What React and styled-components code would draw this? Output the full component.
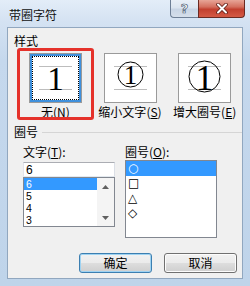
import React from 'react';
import styled, { createGlobalStyle } from 'styled-components';

const GlobalStyle = createGlobalStyle`
  html, body {
    margin: 0;
    padding: 0;
  }
  body {
    width: 250px;
    height: 286px;
    overflow: hidden;
    font-family: "Noto Sans CJK SC", "Liberation Sans", sans-serif;
    font-size: 12px;
    color: #000;
  }
`;

const Window = styled.div`
  width: 250px;
  height: 286px;
  display: flex;
  flex-direction: column;
  box-sizing: border-box;
  background: linear-gradient(180deg, #e3edf8 0px, #d4e2f2 22px, #c5d8ed 60px, #bfd4ea 100%);
`;

const TitleBar = styled.div`
  height: 27px;
  display: flex;
  align-items: flex-start;
`;

const Title = styled.div`
  flex: 1;
  margin: 9px 0 0 9px;
  line-height: 12px;
  color: #111;
`;

const CaptionButtons = styled.div`
  display: flex;
  margin-right: 5px;
`;

const HelpButton = styled.div`
  width: 28px;
  height: 18px;
  box-sizing: border-box;
  border: 1px solid #6e7f96;
  border-top: none;
  border-right: none;
  border-bottom-left-radius: 4px;
  background: linear-gradient(180deg, #e9eff7 0%, #dce5f0 45%, #c9d5e5 55%, #d5dfeb 100%);
  display: flex;
  align-items: center;
  justify-content: center;
  font-family: "DejaVu Sans", sans-serif;
  font-weight: bold;
  font-size: 13px;
  color: #fff;
  -webkit-text-stroke: 0.7px #4f5f75;
`;

const CloseButton = styled.div`
  width: 47px;
  height: 18px;
  box-sizing: border-box;
  border: 1px solid #6a2a22;
  border-top: none;
  border-bottom-right-radius: 4px;
  background: linear-gradient(180deg, #e7a597 0%, #d4705f 40%, #c2402f 55%, #d45a45 100%);
  display: flex;
  align-items: center;
  justify-content: center;
`;

const Client = styled.div`
  flex: 1;
  margin: 0 7px 7px 7px;
  border: 1px solid #91a7bf;
  background: #f0f0f0;
  display: flex;
  flex-direction: column;
`;

const SectionHeader = styled.div`
  display: flex;
  align-items: center;
  height: 14px;
  padding-left: 6px;
  margin-top: ${(p) => p.$top}px;
  line-height: 14px;
`;

const Rule = styled.div`
  flex: 1;
  height: 1px;
  margin-left: 4px;
  background: ${(p) => (p.$visible ? '#d5d5d5' : 'transparent')};
`;

const OptionsRow = styled.div`
  display: flex;
  padding-left: 10px;
  height: 72px;
`;

const Option = styled.div`
  position: relative;
  width: 75px;
  display: flex;
  flex-direction: column;
  align-items: center;
  padding-top: 5px;
  box-sizing: border-box;
`;

const Swatch = styled.div`
  width: 53px;
  height: 50px;
  box-sizing: border-box;
  border: 1px solid #9a9a9a;
  background: ${(p) => (p.$selected ? '#3f90dc' : '#fff')};
  padding: ${(p) => (p.$selected ? '2px' : '0')};
  display: flex;
`;

const Face = styled.div`
  flex: 1;
  background: #fff;
  border: ${(p) => (p.$selected ? '1px dotted #000' : 'none')};
  display: flex;
  align-items: center;
  justify-content: center;
`;

const OptionLabel = styled.div`
  margin-top: 2px;
  height: 14px;
  line-height: 14px;
  white-space: nowrap;
  u {
    text-decoration: underline;
  }
`;

const Highlight = styled.div`
  position: absolute;
  left: -1px;
  right: -1px;
  top: 0;
  bottom: 0;
  border: 3px solid #e5322b;
  border-radius: 3px;
  pointer-events: none;
`;

const FieldsRow = styled.div`
  display: flex;
  gap: 10px;
  padding-left: 15px;
  margin-top: 6px;
`;

const FieldColumn = styled.div`
  width: 92px;
  display: flex;
  flex-direction: column;
`;

const FieldLabel = styled.div`
  height: 14px;
  line-height: 14px;
  white-space: nowrap;
`;

const TextInput = styled.input`
  margin: 3px 0 0 0;
  width: 92px;
  height: 15px;
  box-sizing: border-box;
  border: 1px solid #abadb3;
  border-color: #abadb3 #dbdfe6 #e3e9ef #e2e3ea;
  padding: 0 2px;
  font-family: "Liberation Sans", sans-serif;
  font-size: 12px;
  line-height: 13px;
  outline: none;
  background: #fff;
`;

const ListBox = styled.div`
  height: ${(p) => p.$height}px;
  margin-top: ${(p) => p.$top || 0}px;
  box-sizing: border-box;
  border: 1px solid #828790;
  background: #fff;
  display: flex;
`;

const Items = styled.div`
  flex: 1;
  display: flex;
  flex-direction: column;
`;

const Item = styled.div`
  height: ${(p) => p.$height}px;
  line-height: ${(p) => p.$height}px;
  padding-left: 2px;
  overflow: hidden;
  background: ${(p) => (p.$selected ? '#3399ff' : 'transparent')};
  color: ${(p) => (p.$selected ? '#fff' : '#000')};
  font-family: ${(p) => (p.$symbol ? '"DejaVu Sans", sans-serif' : '"Liberation Sans", sans-serif')};
  font-size: ${(p) => (p.$symbol ? '12px' : '10.5px')};
`;

const ScrollBar = styled.div`
  width: 17px;
  background: #f4f4f4;
  display: flex;
  flex-direction: column;
  justify-content: space-between;
`;

const ScrollArrow = styled.div`
  height: 17px;
  display: flex;
  align-items: center;
  justify-content: center;
`;

const ButtonRow = styled.div`
  margin-top: auto;
  display: flex;
  justify-content: flex-end;
  gap: 12px;
  padding: 0 5px 5px 0;
`;

const Button = styled.div`
  width: 73px;
  height: 20px;
  box-sizing: border-box;
  border: 1px solid ${(p) => (p.$default ? '#3c7fb1' : '#707070')};
  border-radius: 3px;
  background: linear-gradient(180deg, #f2f2f2 0%, #ebebeb 48%, #dddddd 52%, #cfcfcf 100%);
  box-shadow: ${(p) => (p.$default ? 'inset 0 0 0 1px #9fd3f2' : 'inset 0 0 0 1px #fcfcfc')};
  display: flex;
  align-items: center;
  justify-content: center;
  line-height: 14px;
`;

const Preview = ({ variant }) => {
  const serif = '"Liberation Serif", serif';
  return (
    <svg width="45" height="40" viewBox="0 0 45 40">
      <line x1="6" y1="8.5" x2="39" y2="8.5" stroke="#bdbdbd" />
      <line x1="6" y1="31.5" x2="39" y2="31.5" stroke="#bdbdbd" />
      {variant === 'none' && (
        <text x="22.5" y="31.5" textAnchor="middle" fontFamily={serif} fontSize="33">1</text>
      )}
      {variant === 'shrink' && (
        <>
          <circle cx="22.5" cy="16.5" r="12.5" fill="none" stroke="#000" strokeWidth="1" />
          <text x="22.5" y="26" textAnchor="middle" fontFamily={serif} fontSize="27">1</text>
        </>
      )}
      {variant === 'grow' && (
        <>
          <circle cx="22.5" cy="18.5" r="15.5" fill="none" stroke="#000" strokeWidth="1" />
          <text x="22.5" y="32" textAnchor="middle" fontFamily={serif} fontSize="36">1</text>
        </>
      )}
    </svg>
  );
};

const Arrow = ({ up }) => (
  <svg width="7" height="4" viewBox="0 0 7 4">
    <path d={up ? 'M0 4 L3.5 0 L7 4 Z' : 'M0 0 L3.5 4 L7 0 Z'} fill="#606060" />
  </svg>
);

const styles = [
  { id: 'none', label: '无', key: 'N' },
  { id: 'shrink', label: '缩小文字', key: 'S' },
  { id: 'grow', label: '增大圈号', key: 'E' },
];

const texts = ['6', '5', '4', '3'];
const rings = ['○', '□', '△', '◇'];

export default function App() {
  return (
    <>
      <GlobalStyle />
      <Window>
        <TitleBar>
          <Title>带圈字符</Title>
          <CaptionButtons>
            <HelpButton>?</HelpButton>
            <CloseButton>
              <svg width="12" height="11" viewBox="0 0 12 11">
                <path d="M2 1.5 L10 9.5 M10 1.5 L2 9.5" stroke="#5e1d14" strokeWidth="3.6" strokeLinecap="round" />
                <path d="M2 1.5 L10 9.5 M10 1.5 L2 9.5" stroke="#fff" strokeWidth="2" strokeLinecap="round" />
              </svg>
            </CloseButton>
          </CaptionButtons>
        </TitleBar>
        <Client>
          <SectionHeader $top={6}>
            样式
            <Rule />
          </SectionHeader>
          <OptionsRow>
            {styles.map((s, i) => (
              <Option key={s.id}>
                <Swatch $selected={i === 0}>
                  <Face $selected={i === 0}>
                    <Preview variant={s.id} />
                  </Face>
                </Swatch>
                <OptionLabel>
                  {s.label}(<u>{s.key}</u>)
                </OptionLabel>
                {i === 0 && <Highlight />}
              </Option>
            ))}
          </OptionsRow>
          <SectionHeader $top={5}>
            圈号
            <Rule $visible />
          </SectionHeader>
          <FieldsRow>
            <FieldColumn>
              <FieldLabel>
                文字(<u>T</u>):
              </FieldLabel>
              <TextInput defaultValue="6" readOnly />
              <ListBox $height={50}>
                <Items>
                  {texts.map((t, i) => (
                    <Item key={t} $height={12} $selected={i === 0}>{t}</Item>
                  ))}
                </Items>
                <ScrollBar>
                  <ScrollArrow><Arrow up /></ScrollArrow>
                  <ScrollArrow><Arrow /></ScrollArrow>
                </ScrollBar>
              </ListBox>
            </FieldColumn>
            <FieldColumn>
              <FieldLabel>
                圈号(<u>O</u>):
              </FieldLabel>
              <ListBox $height={78} $top={1}>
                <Items>
                  {rings.map((r, i) => (
                    <Item key={r} $height={15} $selected={i === 0} $symbol>{r}</Item>
                  ))}
                </Items>
              </ListBox>
            </FieldColumn>
          </FieldsRow>
          <ButtonRow>
            <Button $default>确定</Button>
            <Button>取消</Button>
          </ButtonRow>
        </Client>
      </Window>
    </>
  );
}
